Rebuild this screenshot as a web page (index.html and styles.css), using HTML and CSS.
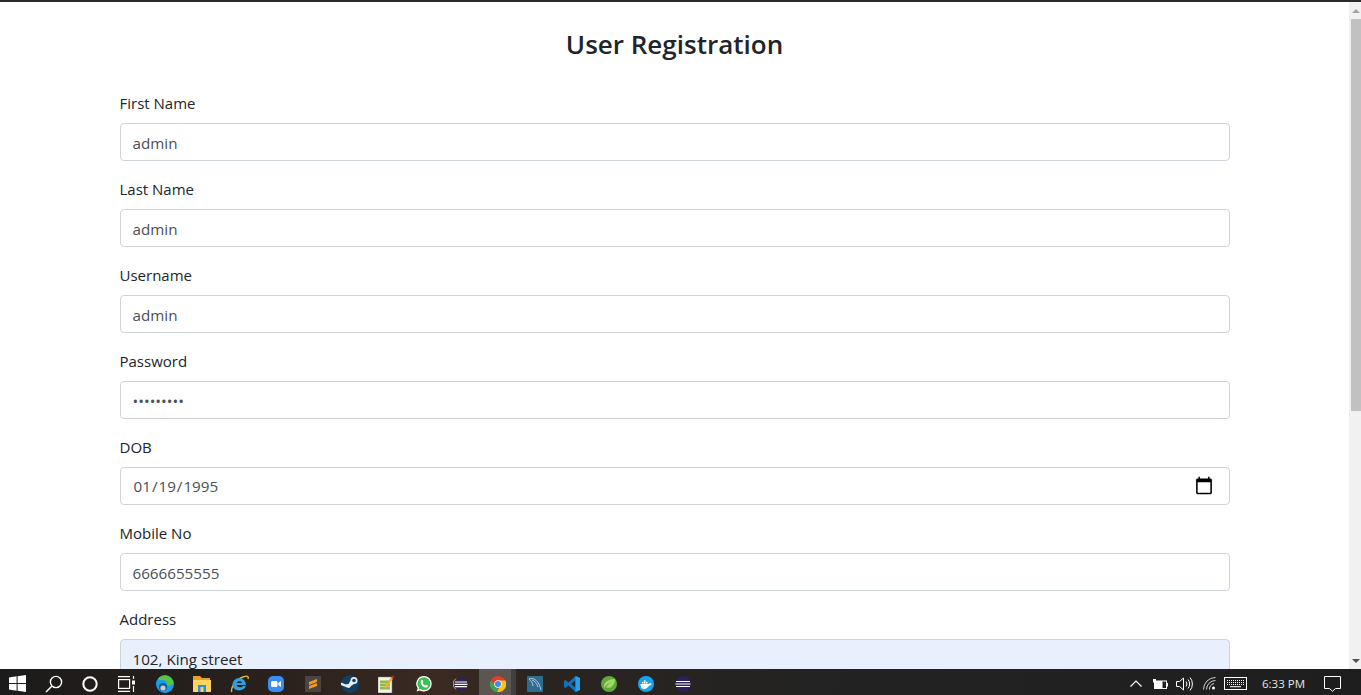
FILE: index.html
```html
<!DOCTYPE html>
<html lang="en">
<head>
    <meta charset="UTF-8">
    <meta name="viewport" content="width=device-width, initial-scale=1.0">
    <title>User Registration</title>
    <link rel="stylesheet" href="styles.css">
</head>
<body>
    <div class="browser-edge"></div>

    <div class="viewport">
        <main class="page">
            <div class="container">
                <h3>User Registration</h3>
                <form>
                    <div class="form-group">
                        <label for="firstName">First Name</label>
                        <input class="form-control" type="text" id="firstName" value="admin">
                    </div>
                    <div class="form-group">
                        <label for="lastName">Last Name</label>
                        <input class="form-control" type="text" id="lastName" value="admin">
                    </div>
                    <div class="form-group">
                        <label for="username">Username</label>
                        <input class="form-control" type="text" id="username" value="admin">
                    </div>
                    <div class="form-group">
                        <label for="password">Password</label>
                        <input class="form-control" type="password" id="password" value="admin1234">
                    </div>
                    <div class="form-group">
                        <label for="dob">DOB</label>
                        <input class="form-control date-control" type="date" id="dob" value="1995-01-19">
                    </div>
                    <div class="form-group">
                        <label for="mobile">Mobile No</label>
                        <input class="form-control" type="text" id="mobile" value="6666655555">
                    </div>
                    <div class="form-group">
                        <label for="address">Address</label>
                        <input class="form-control autofilled" type="text" id="address" value="102, King street">
                    </div>
                </form>
            </div>
        </main>

        <div class="scrollbar">
            <div class="scroll-arrow"><span class="arrow-up"></span></div>
            <div class="scroll-track">
                <div class="scroll-thumb"></div>
            </div>
            <div class="scroll-arrow"><span class="arrow-down"></span></div>
        </div>
    </div>

    <footer class="taskbar">
        <div class="task-left">
            <span class="sys-slot slot-win">
                <svg width="17" height="17" viewBox="0 0 17 17"><path fill="#fff" d="M0 2.4 7.6 1.3V8H0ZM8.6 1.2 17 0V8H8.6ZM0 9H7.6V15.7L0 14.6ZM8.6 9H17V17L8.6 15.8Z"/></svg>
            </span>
            <span class="sys-slot slot-search">
                <svg width="18" height="18" viewBox="0 0 18 18" fill="none" stroke="#fff" stroke-width="1.4"><circle cx="11" cy="7" r="5.6"/><path d="M7 11 1 17"/></svg>
            </span>
            <span class="sys-slot slot-cortana">
                <svg width="16" height="16" viewBox="0 0 16 16" fill="none" stroke="#fff" stroke-width="2"><circle cx="8" cy="8" r="6.7"/></svg>
            </span>
            <span class="sys-slot slot-view">
                <svg width="17" height="16" viewBox="0 0 17 16" fill="none" stroke="#fff" stroke-width="1.2"><path d="M0 .6H12M0 15.4H12"/><rect x=".6" y="3.6" width="11" height="8.8"/><path d="M15.5 0V3" /><rect x="14" y="4.5" width="3" height="4" fill="#fff" stroke="none"/><path d="M15.5 10V16"/></svg>
            </span>

            <span class="app">
                <svg width="18" height="18" viewBox="0 0 18 18"><circle cx="9" cy="9" r="9" fill="#1b9de2"/><path fill="#5ac43c" d="M2 4C5-1 14-1 17 6 18 10 14 12 11 10 12 7 9 5 6 5 4 5 3 5 2 4Z"/><circle cx="7" cy="12" r="4" fill="#0c59a4"/><circle cx="7" cy="13" r="2.6" fill="#c9ccd0"/></svg>
            </span>
            <span class="app">
                <svg width="18" height="16" viewBox="0 0 18 16"><path fill="#e2a42a" d="M0 0H7L9 2H17V5H0Z"/><rect y="4" width="18" height="12" fill="#fcd462"/><rect x="5" y="9" width="8" height="7" fill="#2f8fd8"/><rect x="7.5" y="11" width="3" height="5" fill="#fcd462"/></svg>
            </span>
            <span class="app">
                <svg width="20" height="18" viewBox="0 0 20 18"><path fill="none" stroke="#f2b632" stroke-width="1.4" d="M3 17C1 14 6 5 14 2 18 .5 20 1 19 4"/><path fill="#2ba2e4" d="M10 3A7 7 0 0 1 17 10H7.5C8 12.500 12.500 13 14 11H17C15 17 4 17 3.500 10 3.500 6 6 3.500 10 3ZM7.500 8H13C12.500 5.500 8.500 5.500 7.500 8Z"/></svg>
            </span>
            <span class="app">
                <svg width="16" height="16" viewBox="0 0 16 16"><rect width="16" height="16" rx="5" fill="#3d8cf5"/><rect x="3" y="5" width="6.500" height="6" rx="1.500" fill="#fff"/><path fill="#fff" d="M10.300 7 13 5V11L10.300 9Z"/></svg>
            </span>
            <span class="app">
                <svg width="16" height="16" viewBox="0 0 16 16"><rect width="16" height="16" fill="#4a4543"/><path fill="#f59a1c" d="M4 6 12 3V6L4 9ZM12 7 4 10V13L12 10Z"/></svg>
            </span>
            <span class="app">
                <svg width="18" height="18" viewBox="0 0 18 18"><circle cx="9" cy="9" r="9" fill="#123f66"/><path fill="#e8eef3" d="M0 10 6 12.500A3 3 0 0 0 10 11L13 9A3.500 3.500 0 1 0 9.500 5.500L7.500 9A3 3 0 0 0 5 9.500L0 7.500Z"/><circle cx="13" cy="5.500" r="1.800" fill="#123f66"/></svg>
            </span>
            <span class="app">
                <svg width="17" height="18" viewBox="0 0 17 18"><rect x="0" y="2" width="14" height="16" fill="#f4f4ea" stroke="#777" stroke-width=".5"/><rect x="2" y="5" width="10" height="10" fill="#b9dc7b"/><path stroke="#6e8f3c" d="M2 7H12M2 10H12M2 13H12"/><path stroke="#f0b02c" stroke-width="2.400" d="M7 13 14 3"/><path stroke="#c2282c" stroke-width="2.400" d="M14 3 15.500 1"/></svg>
            </span>
            <span class="app">
                <svg width="16" height="16" viewBox="0 0 16 16"><path fill="#fff" d="M8 0A7.700 7.700 0 0 1 8 15.400C6.500 15.400 5 15 4 14.400L.6 15.500 1.700 12.200A7.700 7.700 0 0 1 8 0Z"/><path fill="#3bbf50" d="M8 1.300A6.400 6.400 0 0 1 8 14.100C6.700 14.100 5.500 13.700 4.300 13L2.500 13.600 3 11.800A6.400 6.400 0 0 1 8 1.300Z"/><path fill="#fff" d="M5.700 4 6.700 4.100 7.300 6 6.700 6.900C7.300 8.200 8.100 9 9.300 9.500L10.200 8.700 11.900 9.500 11.800 10.700C10.900 12 9 11.700 7.400 10.700 5.700 9.500 4.500 7.500 4.700 5.500 4.800 4.800 5.200 4.300 5.700 4Z"/></svg>
            </span>
            <span class="app">
                <svg width="15" height="14" viewBox="0 0 15 14"><circle cx="7.500" cy="7" r="6.800" fill="#2c2255"/><path stroke="#f7941e" fill="none" d="M3 1.500A6.800 6.800 0 0 0 3 12.500"/><path stroke="#fff" stroke-width="1.200" d="M2 5H14M1.500 7.300H14.500M2 9.600H14"/></svg>
            </span>
            <span class="app app-active">
                <svg width="16" height="16" viewBox="0 0 16 16"><circle cx="8" cy="8" r="8" fill="#e33b2e"/><path fill="#f9c515" d="M8 4.500H15.400A8 8 0 0 1 7 16L11 8.500Z"/><path fill="#38a852" d="M.9 4.200 4.900 10 8 11.500 7 16A8 8 0 0 1 .9 4.200Z"/><circle cx="8" cy="8" r="3.800" fill="#fff"/><circle cx="8" cy="8" r="3" fill="#4a86e8"/></svg>
            </span>
            <span class="app">
                <svg width="16" height="16" viewBox="0 0 16 16"><rect width="16" height="16" rx="1" fill="#2f6d90"/><path fill="none" stroke="#b9cbd6" d="M2 3C7 1 12 5 14 14M2 3C4 5 6 7 6 10M5 4C8 5 10 8 11 11"/></svg>
            </span>
            <span class="app">
                <svg width="16" height="16" viewBox="0 0 16 16"><path fill="#0f72bb" d="M11.500 0 16 2V14L11.500 16 4.500 9.500 1.500 12 0 11V5L1.500 4 4.500 6.500ZM11.500 4.500 7 8 11.500 11.500Z"/><path fill="#23a2ea" d="M11.500 0 16 2V14L11.500 16Z"/></svg>
            </span>
            <span class="app">
                <svg width="16" height="16" viewBox="0 0 16 16"><circle cx="8" cy="8" r="8" fill="#5fa83a"/><path fill="#a3d76a" d="M3 12C2 6 8 3 14 3 14 9 10 13 5 11.500 7 8 9 7 11 6 8 6.500 5 8.500 3 12Z"/></svg>
            </span>
            <span class="app">
                <svg width="16" height="16" viewBox="0 0 16 16"><circle cx="8" cy="8" r="8" fill="#16a6ee"/><path fill="#fff" d="M2.500 8H11C11.500 7 12.500 7 13.500 7.500 13 9 12 9.500 11 9.500 10 12 8 13 5.500 13 3.500 13 2.500 10.500 2.500 8Z"/><path fill="#fff" d="M4 6H5.500V7.500H4ZM6 6H7.500V7.500H6ZM8 6H9.500V7.500H8ZM6 4.200H7.500V5.700H6Z"/></svg>
            </span>
            <span class="app">
                <svg width="16" height="16" viewBox="0 0 16 16"><circle cx="8" cy="8" r="8" fill="#2c2255"/><path stroke="#fff" stroke-width="1.200" d="M1 5.500H15M.5 8H15.500M1 10.500H15"/></svg>
            </span>
        </div>

        <div class="tray">
            <svg class="tray-chevron" width="12" height="7" viewBox="0 0 12 7" fill="none" stroke="#fff" stroke-width="1.200"><path d="M.5 6.500 6 1 11.500 6.500"/></svg>
            <svg class="tray-battery" width="16" height="10" viewBox="0 0 16 10"><rect x="2.500" y="2" width="12" height="7.500" fill="none" stroke="#fff"/><rect x="2.500" y="2" width="8" height="7.500" fill="#fff"/><rect x="15" y="4" width="1" height="3.500" fill="#fff"/><path fill="#fff" d="M1 0H4V3.500H1Z"/></svg>
            <svg class="tray-volume" width="17" height="14" viewBox="0 0 17 14" fill="none" stroke="#fff"><path d="M.5 4.500H3.500L7.500 1V13L3.500 9.500H.500Z"/><path d="M10 4.500A4 4 0 0 1 10 9.500M12 2.500A7 7 0 0 1 12 11.500M14 .500A10 10 0 0 1 14 13.500"/></svg>
            <svg class="tray-wifi" width="13" height="13" viewBox="0 0 13 13" fill="none" stroke="#d0d0d0"><path d="M.5 12.500A12 12 0 0 1 12.500 .500M3.500 12.500A9 9 0 0 1 12.500 3.500M6.500 12.500A6 6 0 0 1 11 6.500"/><circle cx="10.500" cy="11" r="1.500" fill="#fff" stroke="none"/></svg>
            <svg class="tray-keys" width="23" height="13" viewBox="0 0 23 13"><rect x=".5" y=".5" width="22" height="12" fill="none" stroke="#fff"/><path stroke="#fff" stroke-dasharray="1 1" d="M3 3.500H20M3 5.500H20M3 7.500H20"/><path stroke="#fff" d="M6 9.700H17"/></svg>
            <span class="clock">6:33 PM</span>
            <svg class="tray-notify" width="17" height="16" viewBox="0 0 17 16" fill="none" stroke="#fff"><path d="M.5.500H16.500V12.500H11.500L8.500 15.300 5.500 12.500H.5Z"/></svg>
        </div>
    </footer>
</body>
</html>
```

FILE: styles.css
```css
* {
    box-sizing: border-box;
}

html,
body {
    height: 100%;
}

body {
    margin: 0;
    display: flex;
    flex-direction: column;
    overflow: hidden;
    background-color: #fff;
    color: #212529;
    font-family: "Open Sans", "Noto Sans", Arial, sans-serif;
    font-size: 15px;
    line-height: 24px;
}

.browser-edge {
    height: 2px;
    flex: none;
    background-color: #2b2b2b;
}

.viewport {
    flex: 1;
    min-height: 0;
    display: flex;
}

.page {
    flex: 1;
    min-width: 0;
    overflow: hidden;
}

.container {
    width: 1140px;
    margin: 0 auto;
    padding: 0 15px;
}

h3 {
    margin: 0 0 29px;
    padding-top: 24px;
    text-align: center;
    font-size: 26px;
    font-weight: 600;
    line-height: 36px;
}

.form-group {
    margin-bottom: 16px;
}

label {
    display: block;
    margin-bottom: 8px;
}

.form-control {
    display: block;
    width: 100%;
    height: 38px;
    padding: 7px 12px 5px;
    border: 1px solid #ced4da;
    border-radius: 4px;
    background-color: #fff;
    color: #495057;
    font-family: inherit;
    font-size: 15.2px;
    line-height: 24px;
}

.date-control {
    padding: 6px 12px;
}

.date-control::-webkit-calendar-picker-indicator {
    width: 20px;
    height: 20px;
    padding: 0;
    margin-right: 3px;
}

.autofilled {
    background-color: #e8f0fe;
    color: #212529;
}

.scrollbar {
    width: 12px;
    flex: none;
    display: flex;
    flex-direction: column;
    background-color: #f1f1f1;
}

.scroll-arrow {
    height: 17px;
    flex: none;
    display: flex;
    align-items: center;
    justify-content: center;
    padding-left: 2px;
}

.arrow-up,
.arrow-down {
    width: 0;
    height: 0;
    border-left: 4px solid transparent;
    border-right: 4px solid transparent;
}

.arrow-up {
    border-bottom: 4px solid #a3a3a3;
}

.arrow-down {
    border-top: 4px solid #505050;
}

.scroll-track {
    flex: 1;
    padding-left: 2px;
}

.scroll-thumb {
    height: 392px;
    background-color: #c1c1c1;
}

.taskbar {
    height: 26px;
    flex: none;
    display: flex;
    justify-content: space-between;
    background: linear-gradient(90deg, #1b1b1b 0, #2a211c 20%, #3a2a22 32%, #2a2420 40%, #232323 60%, #1e1e1e 100%);
}

.task-left {
    display: flex;
    align-items: center;
    height: 100%;
}

.sys-slot {
    height: 100%;
    padding-top: 3px;
    display: flex;
    align-items: center;
    justify-content: center;
}

.slot-win {
    width: 34px;
}

.slot-search {
    width: 40px;
}

.slot-cortana {
    width: 32px;
}

.slot-view {
    width: 40px;
}

.app {
    width: 37px;
    height: 100%;
    padding-top: 3px;
    display: flex;
    align-items: center;
    justify-content: center;
}

.app-active {
    background: linear-gradient(90deg, #5c5550 0, #5c5550 87%, #40403e 87%, #40403e 100%);
}

.tray {
    display: flex;
    align-items: center;
    height: 100%;
    padding-top: 3px;
    color: #fff;
}

.tray-chevron {
    margin-right: 10px;
}

.tray-battery {
    margin-right: 8px;
}

.tray-volume {
    margin-right: 10px;
}

.tray-wifi {
    margin-right: 8px;
}

.tray-keys {
    margin-right: 15px;
}

.clock {
    font-size: 11.5px;
    width: 44px;
    white-space: nowrap;
    margin-right: 18px;
    color: #e6e6e6;
}

.tray-notify {
    margin-right: 20px;
}
```
